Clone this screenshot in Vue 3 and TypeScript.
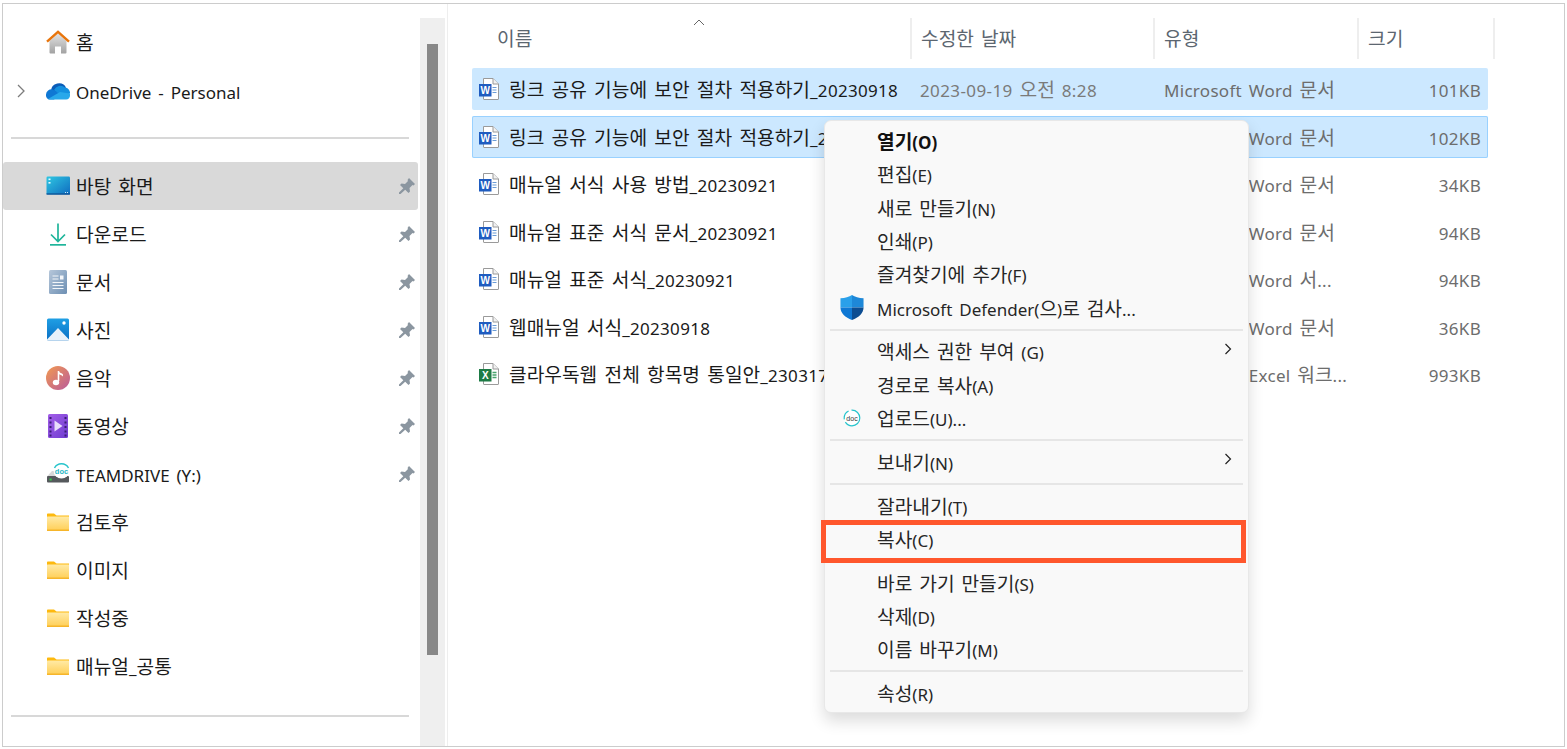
<script setup lang="ts">
type Nav = { icon: string; label: string; pin?: boolean; sel?: boolean };
const topNav: Nav[] = [
  { icon: 'home', label: '홈' },
  { icon: 'cloud', label: 'OneDrive - Personal' },
];
const nav: Nav[] = [
  { icon: 'desktop', label: '바탕 화면', pin: true, sel: true },
  { icon: 'download', label: '다운로드', pin: true },
  { icon: 'docs', label: '문서', pin: true },
  { icon: 'photo', label: '사진', pin: true },
  { icon: 'music', label: '음악', pin: true },
  { icon: 'video', label: '동영상', pin: true },
  { icon: 'drive', label: 'TEAMDRIVE (Y:)', pin: true },
  { icon: 'folder', label: '검토후' },
  { icon: 'folder', label: '이미지' },
  { icon: 'folder', label: '작성중' },
  { icon: 'folder', label: '매뉴얼_공통' },
];
const columns = ['이름', '수정한 날짜', '유형', '크기'];
type FileRow = { name: string; date: string; type: string; size: string; kind: string; sel?: boolean; focus?: boolean };
const files: FileRow[] = [
  { name: '링크 공유 기능에 보안 절차 적용하기_20230918', date: '2023-09-19 오전 8:28', type: 'Microsoft Word 문서', size: '101KB', kind: 'W', sel: true },
  { name: '링크 공유 기능에 보안 절차 적용하기_2', date: '', type: 'Microsoft Word 문서', size: '102KB', kind: 'W', sel: true, focus: true },
  { name: '매뉴얼 서식 사용 방법_20230921', date: '', type: 'Microsoft Word 문서', size: '34KB', kind: 'W' },
  { name: '매뉴얼 표준 서식 문서_20230921', date: '', type: 'Microsoft Word 문서', size: '94KB', kind: 'W' },
  { name: '매뉴얼 표준 서식_20230921', date: '', type: 'Microsoft Word 서...', size: '94KB', kind: 'W' },
  { name: '웹매뉴얼 서식_20230918', date: '', type: 'Microsoft Word 문서', size: '36KB', kind: 'W' },
  { name: '클라우독웹 전체 항목명 통일안_230317', date: '', type: 'Microsoft Excel 워크...', size: '993KB', kind: 'X' },
];
type MenuEntry = { label?: string; sep?: boolean; bold?: boolean; icon?: string; sub?: boolean };
const menu: MenuEntry[] = [
  { label: '열기(O)', bold: true },
  { label: '편집(E)' },
  { label: '새로 만들기(N)' },
  { label: '인쇄(P)' },
  { label: '즐겨찾기에 추가(F)' },
  { label: 'Microsoft Defender(으)로 검사...', icon: 'shield' },
  { sep: true },
  { label: '액세스 권한 부여 (G)', sub: true },
  { label: '경로로 복사(A)' },
  { label: '업로드(U)...', icon: 'doc' },
  { sep: true },
  { label: '보내기(N)', sub: true },
  { sep: true },
  { label: '잘라내기(T)' },
  { label: '복사(C)' },
  { sep: true },
  { label: '바로 가기 만들기(S)' },
  { label: '삭제(D)' },
  { label: '이름 바꾸기(M)' },
  { sep: true },
  { label: '속성(R)' },
];

// The original UI font has larger Hangul than Latin glyphs, so each script gets its own run.
type Run = { text: string; cls: string };
function runs(text?: string): Run[] {
  if (!text) return [];
  return text
    .split(/([\uac00-\ud7a3]+)/)
    .filter((t) => t.length > 0)
    .map((t) => ({ text: t, cls: /[\uac00-\ud7a3]/.test(t) ? 'ko' : 'lat' }));
}
</script>

<template>
  <div class="frame">
    <aside class="sidebar">
      <div class="nav-top">
        <div v-for="n in topNav" :key="n.label" class="nav-row">
          <svg v-if="n.icon === 'cloud'" class="chev" viewBox="0 0 8 14"><path d="M1 1l6 6-6 6" fill="none" stroke="#7c7c7c" stroke-width="1.3"/></svg>
          <svg class="nav-icon" viewBox="0 0 24 24">
            <template v-if="n.icon === 'home'">
              <defs><linearGradient id="hb" x1="0" y1="0" x2="0" y2="1"><stop offset="0" stop-color="#e4e4e4"/><stop offset="1" stop-color="#a2a2a2"/></linearGradient></defs>
              <path d="M3.500 11L12 3l8.500 8v11.500a1 1 0 0 1-1 1H15v-7H9v7H4.500a1 1 0 0 1-1-1z" fill="url(#hb)"/>
              <path d="M1 11.600L12 1.800l11 9.800" fill="none" stroke="#e8750c" stroke-width="2.400"/>
            </template>
            <template v-else>
              <path d="M5 12a8 8 0 0 1 15-3.500L12 14z" fill="#0a5cb8"/>
              <path d="M0 16a5.500 5.500 0 0 1 7-5.500l8 5-7 5H4a4 4 0 0 1-4-4.500z" fill="#0f78d4"/>
              <path d="M8 11a7 7 0 0 1 11-2.500 5.500 5.500 0 0 1 5 6L16 17z" fill="#1490df"/>
              <path d="M2 20c.6.4 1.300.5 2 .5h16a4 4 0 0 0 4-4.500c0-.7 0-1-.1-1.400L14 13z" fill="#28a8ea"/>
            </template>
          </svg>
          <span class="nav-label"><span v-for="(r, i) in runs(n.label)" :key="i" :class="r.cls">{{ r.text }}</span></span>
        </div>
      </div>
      <div class="divider first"></div>
      <div class="nav-list">
        <div v-for="n in nav" :key="n.label" class="nav-row" :class="{ selected: n.sel }">
          <svg class="nav-icon" viewBox="0 0 24 24">
            <template v-if="n.icon === 'desktop'">
              <defs><linearGradient id="dk" x1="0" y1="0" x2="1" y2="1"><stop offset="0" stop-color="#2fc7e2"/><stop offset="1" stop-color="#0f6cc0"/></linearGradient></defs>
              <rect x="0.500" y="2.500" width="23.500" height="18" rx="1.200" fill="url(#dk)"/>
              <rect x="2.500" y="4.500" width="2" height="1.600" fill="#e6fbff"/><rect x="2.500" y="8" width="2" height="1.600" fill="#e6fbff"/>
              <rect x="0.500" y="19.400" width="23.500" height="1.200" fill="#0a4d91"/>
              <rect x="19" y="18" width="1" height="1" fill="#cfe9f7"/><rect x="21" y="18" width="1" height="1" fill="#cfe9f7"/>
            </template>
            <template v-else-if="n.icon === 'download'">
              <path d="M12 1.500V19M5 12.500l7 7 7-7" fill="none" stroke="#1fb59b" stroke-width="1.700"/>
              <rect x="4" y="22" width="16" height="1.700" fill="#1fb59b"/>
            </template>
            <template v-else-if="n.icon === 'docs'">
              <defs><linearGradient id="dc" x1="0" y1="0" x2="1" y2="1"><stop offset="0" stop-color="#b6c7da"/><stop offset="1" stop-color="#6d8fb3"/></linearGradient></defs>
              <rect x="3" y="0" width="18" height="24" rx="1.500" fill="url(#dc)"/>
              <path d="M6.500 6h6M6.500 9h6M6.500 12.500h11M6.500 15.500h11M6.500 18.500h11" stroke="#f3f6f9" stroke-width="1"/>
              <rect x="14" y="5.500" width="3.500" height="4" fill="#f3f6f9"/>
            </template>
            <template v-else-if="n.icon === 'photo'">
              <defs><linearGradient id="ph" x1="0" y1="0" x2="0" y2="1"><stop offset="0" stop-color="#1f9fe4"/><stop offset="1" stop-color="#0b6fc4"/></linearGradient></defs>
              <rect x="1" y="0.500" width="22" height="22" rx="1.500" fill="url(#ph)"/>
              <path d="M1 21.500L12 10l11 11.500v.2a1 1 0 0 1-1 .8H2a1 1 0 0 1-1-.8z" fill="#e7f1fa"/>
              <circle cx="18" cy="5" r="1.700" fill="#fff"/>
            </template>
            <template v-else-if="n.icon === 'music'">
              <defs><linearGradient id="mu" x1="0" y1="0" x2="1" y2="1"><stop offset="0" stop-color="#f29a50"/><stop offset="1" stop-color="#b95a9c"/></linearGradient></defs>
              <circle cx="12" cy="12" r="12" fill="url(#mu)"/>
              <path d="M12.500 5v10" stroke="#fff" stroke-width="1.600"/><path d="M12.500 5c1 2 3.500 2 4.500 3.500v2c-1.500-1.500-3-1.500-4.500-2.500z" fill="#fff"/>
              <ellipse cx="10" cy="16.500" rx="3.200" ry="2.800" fill="#fff"/>
            </template>
            <template v-else-if="n.icon === 'video'">
              <defs><linearGradient id="vi" x1="0" y1="0" x2="1" y2="1"><stop offset="0" stop-color="#a35ee8"/><stop offset="1" stop-color="#6e3cd0"/></linearGradient></defs>
              <rect x="2" y="0" width="20" height="24" rx="1.500" fill="url(#vi)"/>
              <path d="M3.500 3h2v2h-2zM3.500 7.500h2v2h-2zM3.500 12h2v2h-2zM3.500 16.500h2v2h-2zM3.500 20.500h2v2h-2zM18.500 3h2v2h-2zM18.500 7.500h2v2h-2zM18.500 12h2v2h-2zM18.500 16.500h2v2h-2zM18.500 20.500h2v2h-2z" fill="#3b1c74"/>
              <path d="M8.500 6.500l8 5.500-8 5.500z" fill="#e9ddfb"/>
            </template>
            <template v-else-if="n.icon === 'drive'">
              <path d="M1 14.500L6 9h11v5.500z" fill="#d8d8d8"/>
              <rect x="1" y="14" width="22" height="6.500" rx="1" fill="#55595c"/>
              <rect x="3.500" y="16.500" width="2.200" height="2" fill="#35d04a"/>
              <circle cx="15.500" cy="8.500" r="8" fill="#fff"/>
              <path d="M8.500 6a8 8 0 0 1 14 0" fill="none" stroke="#27c4cb" stroke-width="1.500"/>
              <text x="15.500" y="11.500" text-anchor="middle" class="tiny-doc" fill="#27b7c4">doc</text>
            </template>
            <template v-else>
              <defs><linearGradient id="fo" x1="0" y1="0" x2="0" y2="1"><stop offset="0" stop-color="#ffeaa6"/><stop offset="1" stop-color="#ffcf57"/></linearGradient></defs>
              <path d="M1 4.500c0-.6.400-1 1-1h6l2.500 2H23V20a1 1 0 0 1-1 1H2a1 1 0 0 1-1-1z" fill="#fdb90f"/>
              <rect x="1" y="6.500" width="22" height="14" rx="0.500" fill="url(#fo)"/>
              <rect x="1" y="19.500" width="22" height="1.500" fill="#f6b52a"/>
            </template>
          </svg>
          <span class="nav-label"><span v-for="(r, i) in runs(n.label)" :key="i" :class="r.cls">{{ r.text }}</span></span>
          <svg v-if="n.pin" class="pin" viewBox="0 0 16 16">
            <path d="M10 0l6 6-1.500 1.500-1-.5-3 3 .5 3.500-1.500 1.500-3.300-3.300L1.500 16H0v-1.500l4.300-4.200L1 7l1.500-1.500 3.500.5 3-3-.5-1z" fill="#8b96a0"/>
          </svg>
        </div>
      </div>
      <div class="divider second"></div>
    </aside>

    <div class="track"><div class="thumb"></div></div>

    <main class="main">
      <svg class="sort" viewBox="0 0 12 7"><path d="M1 6l5-5 5 5" fill="none" stroke="#666" stroke-width="1"/></svg>
      <div class="header">
        <div v-for="c in columns" :key="c" class="head-cell"><span v-for="(r, i) in runs(c)" :key="i" :class="r.cls">{{ r.text }}</span></div>
      </div>
      <div class="rows">
        <div v-for="f in files" :key="f.name" class="row" :class="{ sel: f.sel, focus: f.focus }">
          <div class="name">
            <svg class="file-icon" viewBox="0 0 20 22">
              <path d="M4.500.500h9.500l5.500 5.500v15a.5.5 0 0 1-.5.500H5a.5.5 0 0 1-.5-.500z" fill="#fff" stroke="#9a9a9a"/>
              <path d="M14 .500V6h5.500" fill="#f1f1f1" stroke="#9a9a9a"/>
              <template v-if="f.kind === 'W'">
                <path d="M13.500 9.500h4M13.500 12h4M13.500 14.500h4" stroke="#6b9bd6" stroke-width="1.200"/>
                <rect x="0" y="6" width="12.500" height="12.500" fill="#1f5cc0"/>
                <text x="6.250" y="15.800" text-anchor="middle" class="file-letter">W</text>
              </template>
              <template v-else>
                <path d="M13.500 9.500h4M13.500 12h4M13.500 14.500h4" stroke="#46a36c" stroke-width="1.400"/>
                <rect x="0" y="6" width="12.500" height="12.500" fill="#1d7b45"/>
                <text x="6.250" y="15.800" text-anchor="middle" class="file-letter">X</text>
              </template>
            </svg>
            <span class="name-text"><span v-for="(r, i) in runs(f.name)" :key="i" :class="r.cls">{{ r.text }}</span></span>
          </div>
          <div class="meta date"><span v-for="(r, i) in runs(f.date)" :key="i" :class="r.cls">{{ r.text }}</span></div>
          <div class="meta"><span v-for="(r, i) in runs(f.type)" :key="i" :class="r.cls">{{ r.text }}</span></div>
          <div class="meta size"><span v-for="(r, i) in runs(f.size)" :key="i" :class="r.cls">{{ r.text }}</span></div>
        </div>
      </div>
    </main>

    <div class="menu">
      <template v-for="(m, i) in menu" :key="i">
        <div v-if="m.sep" class="menu-sep"></div>
        <div v-else class="menu-item" :class="{ bold: m.bold }">
          <svg v-if="m.icon === 'shield'" class="menu-icon" viewBox="0 0 24 26">
            <path d="M12 0C9 2 5 3.200 0 3.500V13h12z" fill="#2aa0ea"/>
            <path d="M12 13H0c0 6 5 10.500 12 13z" fill="#0f78d4"/>
            <path d="M12 0c3 2 7 3.200 12 3.500V13H12z" fill="#1e88d8"/>
            <path d="M12 13h12c0 6-5 10.500-12 13z" fill="#0c4d92"/>
          </svg>
          <svg v-else-if="m.icon === 'doc'" class="menu-icon small" viewBox="0 0 18 18">
            <circle cx="9" cy="9" r="7.800" fill="#fff" stroke="#25c4cc" stroke-width="1.200" stroke-dasharray="20 3 10 3"/>
            <text x="9" y="11.800" text-anchor="middle" class="menu-doc">doc</text>
          </svg>
          <span class="menu-label"><span v-for="(r, j) in runs(m.label)" :key="j" :class="r.cls">{{ r.text }}</span></span>
          <svg v-if="m.sub" class="menu-sub" viewBox="0 0 8 12"><path d="M1.500 1l5 5-5 5" fill="none" stroke="#222" stroke-width="1.200"/></svg>
        </div>
      </template>
    </div>
    <div class="highlight"></div>
  </div>
</template>

<style scoped>
.frame {
  position: absolute;
  left: 2px;
  top: 3px;
  width: 1563px;
  height: 744px;
  box-sizing: border-box;
  border: 1px solid #cccccc;
  background: #fff;
  display: flex;
  font-family: "Noto Sans", "Noto Sans CJK KR", sans-serif;
  font-size: 17px;
  color: #1a1a1a;
  overflow: hidden;
}
.ko {
  font-family: "Noto Sans CJK KR", sans-serif;
  font-size: 19.200px;
  line-height: 1;
}
.lat {
  font-size: 17px;
  line-height: 1;
  word-spacing: 2.500px;
}
.meta .lat { letter-spacing: 0.300px; word-spacing: 2px; }
.date .lat { letter-spacing: 0.400px; }
.name-text .lat { letter-spacing: 0.300px; }
.sidebar {
  width: 417px;
  flex: none;
  padding-top: 14px;
  box-sizing: border-box;
}
.nav-row {
  height: 48px;
  display: flex;
  align-items: center;
  position: relative;
  padding-left: 43px;
  margin-right: 2px;
  border-radius: 3px;
}
.nav-top .nav-row + .nav-row { margin-top: 0.500px; }
.nav-row.selected { background: #d9d9d9; }
.chev {
  position: absolute;
  left: 14px;
  top: 17px;
  width: 8px;
  height: 14px;
}
.nav-icon {
  width: 24px;
  height: 24px;
  flex: none;
}
.nav-label {
  margin-left: 6px;
  padding-top: 3px;
  white-space: nowrap;
}
.pin {
  width: 16px;
  height: 16px;
  margin-left: auto;
  margin-right: 3px;
}
.divider {
  height: 2px;
  background: #d8d8d8;
  margin-left: 8px;
  width: 398px;
}
.divider.first { margin-top: 22.500px; margin-bottom: 23px; }
.divider.second { margin-top: 25px; }
.track {
  width: 25px;
  flex: none;
  margin-top: 14px;
  background: #efefef;
  padding: 26px 7px 0;
  box-sizing: border-box;
}
.thumb {
  width: 11px;
  height: 611px;
  background: #888888;
}
.main {
  flex: 1;
  position: relative;
  margin-left: 2px;
  border-left: 1px solid #eeeeee;
  padding: 14px 0 0 24px;
}
.sort {
  position: absolute;
  left: 245px;
  top: 15px;
  width: 12px;
  height: 7px;
}
.header {
  display: grid;
  grid-template-columns: 440px 243px 204px 136px;
  height: 41px;
}
.head-cell {
  box-sizing: border-box;
  border-right: 2px solid #eeeeee;
  padding: 2px 0 0 9px;
  line-height: 39px;
  height: 41px;
  color: #5c6670;
}
.head-cell:first-child { padding-left: 25px; }
.rows {
  display: flex;
  flex-direction: column;
  gap: 5.500px;
  margin-top: 9px;
  width: 1016px;
}
.row {
  display: grid;
  grid-template-columns: 439px 243px 204px 130px;
  height: 42px;
  align-items: center;
  box-sizing: border-box;
  border-radius: 2px;
}
.row.sel { background: #cce8ff; }
.row.focus { box-shadow: inset 0 0 0 1px #99d1ff; }
.name {
  display: flex;
  align-items: center;
  padding-left: 7px;
  min-width: 0;
  white-space: nowrap;
}
.file-icon {
  width: 20px;
  height: 22px;
  flex: none;
  overflow: visible;
}
.file-letter {
  font-family: "Liberation Sans", sans-serif;
  font-size: 10px;
  font-weight: 700;
  fill: #fff;
}
.name-text { margin-left: 10px; padding-top: 3px; }
.meta {
  color: #6d6d6d;
  padding: 3px 0 0 10px;
  white-space: nowrap;
}
.date { padding-left: 9px; color: #7a7a7a; }
.size {
  text-align: right;
  padding: 3px 7px 0 0;
}
.tiny-doc {
  font-family: "Liberation Sans", sans-serif;
  font-size: 7.500px;
  font-weight: 700;
}
.menu {
  position: absolute;
  left: 821px;
  top: 116px;
  width: 425px;
  height: 593px;
  box-sizing: border-box;
  background: #f9f9f9;
  border: 1px solid #e8e8e8;
  border-radius: 7px;
  box-shadow: 0 8px 16px rgba(0, 0, 0, 0.14);
  padding: 3.500px 3px 0;
  color: #262626;
}
.menu-item {
  height: 33.300px;
  display: flex;
  align-items: center;
  padding-left: 49px;
  position: relative;
  white-space: nowrap;
}
.menu-label { padding-top: 3px; }
.menu-item.bold { font-weight: 700; color: #111; }
.menu-icon {
  position: absolute;
  left: 12px;
  top: 4px;
  width: 24px;
  height: 25px;
}
.menu-icon.small {
  left: 15px;
  top: 8px;
  width: 18px;
  height: 18px;
}
.menu-doc {
  font-family: "Liberation Sans", sans-serif;
  font-size: 7px;
  fill: #333;
}
.menu-sub {
  position: absolute;
  left: 396px;
  top: 8px;
  width: 8px;
  height: 12px;
}
.menu-sep {
  height: 2px;
  margin: 4.250px 2px;
  background: #e6e6e6;
}
.highlight {
  position: absolute;
  left: 818px;
  top: 516px;
  width: 425px;
  height: 43px;
  box-sizing: border-box;
  border: 5px solid #ff572d;
  pointer-events: none;
}
</style>
<style>
html, body { margin: 0; background: #fff; }
</style>
